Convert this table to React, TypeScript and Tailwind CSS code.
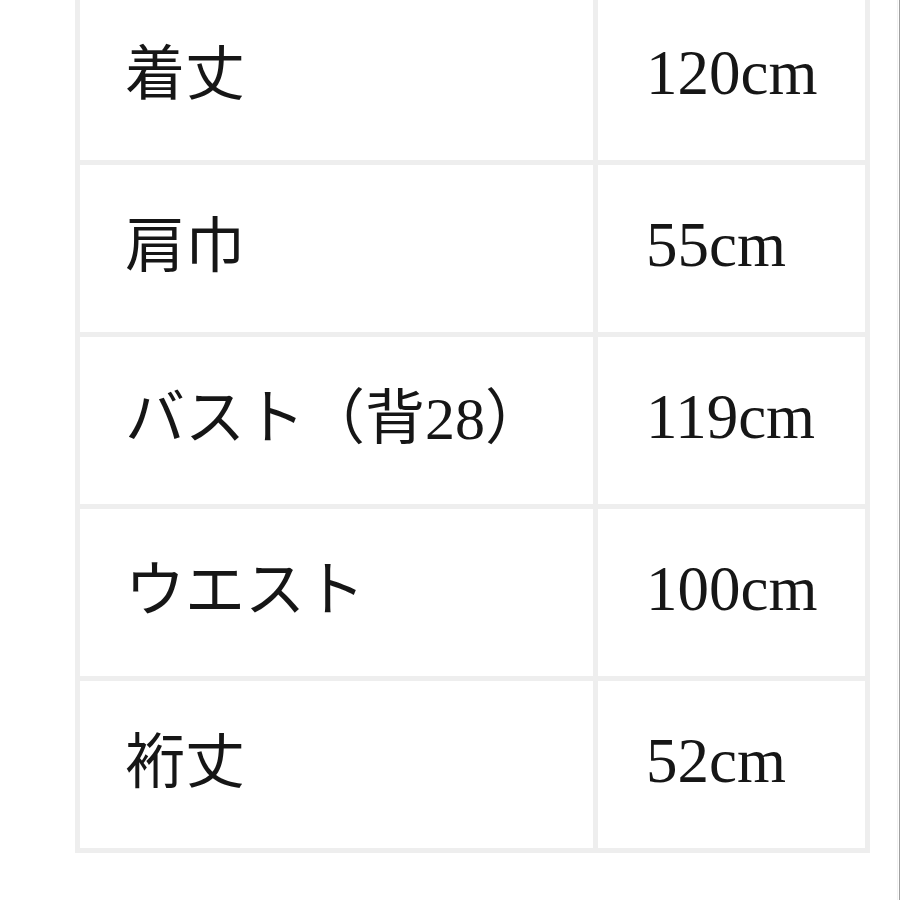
const rows: [string, string][] = [
  ["着丈", "120cm"],
  ["肩巾", "55cm"],
  ["バスト（背28）", "119cm"],
  ["ウエスト", "100cm"],
  ["裄丈", "52cm"],
];

export default function App() {
  return (
    <div className="flex h-[900px] w-[900px] overflow-hidden bg-white font-['Liberation_Serif','Noto_Sans_CJK_JP',serif] leading-none text-[#161616]">
      <div className="ml-[75px] mt-[-12px] grid h-fit grid-cols-[513px_267px] gap-[5px] bg-[#eeeeee] p-[5px]">
        {rows.map(([label, value]) => (
          <div key={label} className="contents">
            <div className="flex h-[167px] items-center bg-white pb-[4px] pl-[45px] text-[60px]">{label}</div>
            <div className="flex h-[167px] items-center bg-white pb-[6px] pl-[48px] text-[63px]">{value}</div>
          </div>
        ))}
      </div>
      <div className="ml-auto flex">
        <div className="w-px bg-[#f2f2f2]" />
        <div className="w-px bg-white" />
        <div className="w-px bg-[#a0a0a0]" />
      </div>
    </div>
  );
}
